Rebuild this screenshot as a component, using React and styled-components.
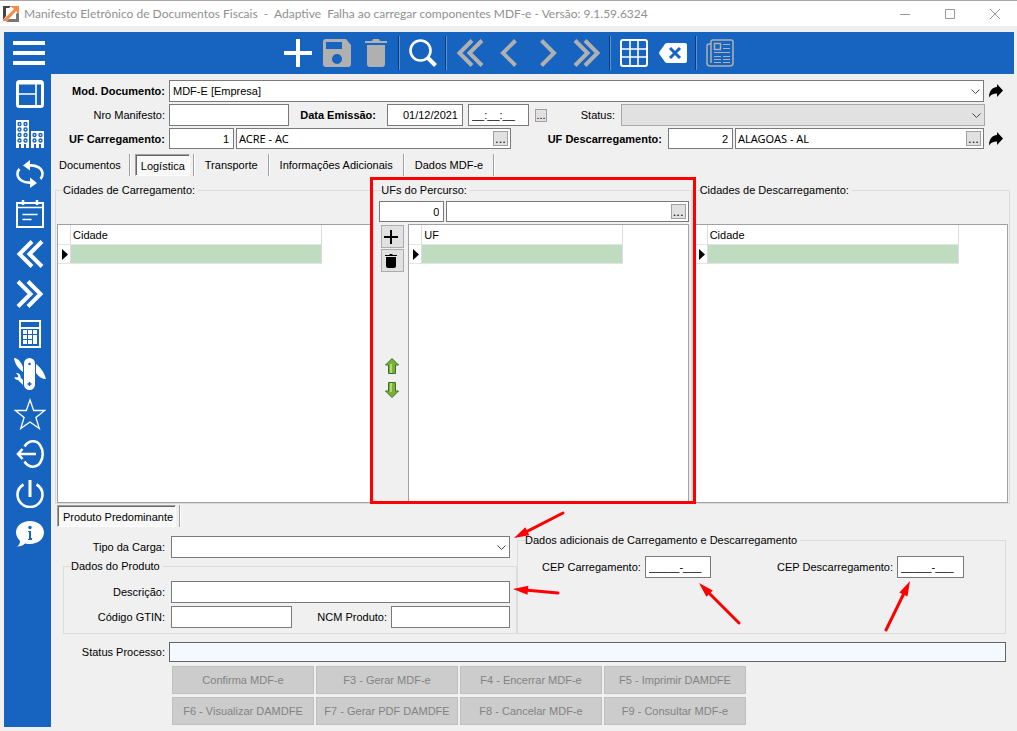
import React from 'react'
import styled, { createGlobalStyle, css } from 'styled-components'

const GlobalStyle = createGlobalStyle`
  * {
    box-sizing: border-box;
  }
  body {
    margin: 0;
    background: #f0f0f0;
    color: #000;
    font-family: "Liberation Sans", Arial, sans-serif;
    font-size: 11px;
    line-height: 14px;
  }
  button, input, select {
    font: inherit;
    color: inherit;
    margin: 0;
    border-radius: 0;
  }
  svg {
    display: block;
    flex: none;
  }
`

const Window = styled.div`
  display: flex;
  flex-direction: column;
  min-height: 100vh;
`

const TitleBar = styled.header`
  display: flex;
  align-items: center;
  height: 26px;
  padding-left: 3px;
  background: #fff;
  border-top: 1px solid #a8a8a8;
`

const Title = styled.h1`
  flex: 1;
  margin: 0 0 0 5px;
  color: #909090;
  font-family: Lato, "Noto Sans", sans-serif;
  font-size: 12px;
  font-weight: 400;
  white-space: pre;
`

const WindowButton = styled.button`
  display: flex;
  align-items: center;
  justify-content: center;
  width: 45px;
  height: 24px;
  padding: 0;
  border: 0;
  background: none;
`

const Frame = styled.div`
  flex: 1;
  display: flex;
  flex-direction: column;
  padding: 6px 3px 4px 4px;
`

const Toolbar = styled.div`
  display: grid;
  grid-template-columns: 1fr auto 1fr;
  align-items: center;
  height: 42px;
  padding: 0 6px 0 5px;
  background: #1664c0;
`

const ToolGroup = styled.div`
  display: flex;
  align-items: center;
`

const ToolButton = styled.button`
  display: flex;
  align-items: center;
  justify-content: center;
  width: 39px;
  height: 40px;
  padding: 0;
  border: 0;
  background: none;
`

const ToolDivider = styled.div`
  width: 2px;
  height: 34px;
  margin: 0 3px;
  border-left: 1px solid #0c3c78;
  border-right: 1px solid #5a93d6;
`

const Body = styled.div`
  flex: 1;
  display: flex;
`

const SideBar = styled.nav`
  display: flex;
  flex-direction: column;
  flex: none;
  width: 47px;
  padding-left: 4px;
  background: #1664c0;
`

const SideButton = styled.button`
  display: flex;
  align-items: center;
  justify-content: center;
  height: 40px;
  padding: 0;
  border: 0;
  background: none;
`

const Main = styled.main`
  flex: 1;
  min-width: 0;
  display: flex;
  flex-direction: column;
  padding: 6px 4px 2px;
`

const Rows = styled.div`
  display: flex;
  flex-direction: column;
  gap: ${props => props.$gap || 2}px;
`

const Row = styled.div`
  position: relative;
  display: flex;
  align-items: center;
  padding-right: ${props => props.$end || 0}px;
`

const Label = styled.label`
  flex: none;
  width: ${props => props.$width ? props.$width + 'px' : 'auto'};
  padding-right: ${props => props.$end || 4}px;
  font-weight: ${props => props.$bold ? 700 : 400};
  text-align: right;
  white-space: nowrap;
`

const fieldFont = css`
  font-family: "Noto Sans", sans-serif;
  font-size: 11px;
`

const TextField = styled.input`
  flex: ${props => props.$width ? 'none' : '1'};
  width: ${props => props.$width ? props.$width + 'px' : 'auto'};
  min-width: 0;
  height: ${props => props.$low ? 21 : 22}px;
  margin-right: ${props => props.$after || 0}px;
  padding: 0 4px 0 3px;
  border: 1px solid #7a7a7a;
  background: #fff;
  text-align: ${props => props.$right ? 'right' : 'left'};
  outline: none;
`

const SelectBox = styled.div`
  flex: 1;
  min-width: 0;
  display: grid;
  align-items: center;
  svg {
    grid-area: 1 / 1;
    justify-self: end;
    margin-right: 4px;
    pointer-events: none;
  }
`

const Select = styled.select`
  grid-area: 1 / 1;
  appearance: none;
  width: 100%;
  height: 22px;
  padding: 0 20px 0 3px;
  border: 1px solid #7a7a7a;
  background: #fff;
  opacity: 1;
  &:disabled {
    border-color: #a8a8a8;
    background: #e1e1e1;
  }
`

const LookupBox = styled.div`
  flex: 1 1 ${props => props.$basis || 0}px;
  min-width: 0;
  display: flex;
  align-items: center;
  height: 21px;
  padding-right: 2px;
  border: 1px solid #7a7a7a;
  background: #fff;
  input {
    ${fieldFont}
    flex: 1;
    min-width: 0;
    padding: 0 2px;
    border: 0;
    background: none;
    outline: none;
  }
`

const Dots = styled.button`
  flex: none;
  display: flex;
  align-items: flex-end;
  justify-content: center;
  width: ${props => props.$small ? 12 : 15}px;
  height: ${props => props.$small ? 13 : 15}px;
  padding: 0;
  border: 1px solid #a0a0a0;
  background: #e1e1e1;
  font-size: ${props => props.$small ? 11 : 13}px;
  line-height: 12px;
`

const Follow = styled.button`
  flex: none;
  display: flex;
  width: 26px;
  padding: 0 0 0 5px;
  border: 0;
  background: none;
`

const Tabs = styled.div`
  display: flex;
  align-items: center;
  height: 22px;
  margin-top: ${props => props.$top}px;
  padding-left: ${props => props.$indent}px;
`

const Tab = styled.button`
  height: 22px;
  padding: 0 10px;
  border: 0;
  background: none;
  white-space: nowrap;
  &:first-child {
    padding: 0 8px 0 0;
  }
  &[aria-selected='true'] {
    margin: 0 3px 0 4px;
    padding: 1px 4px 0 5px;
    border: 1px solid #fff;
    border-top-color: #a0a0a0;
    border-left-color: #a0a0a0;
    background: #f8f8f8;
    box-shadow: inset 1px 1px 0 #696969;
  }
  &[aria-selected='true']:first-child {
    margin-left: 0;
    padding-right: 2px;
  }
`

const TabDivider = styled.div`
  width: 2px;
  height: 22px;
  border-left: 1px solid #a0a0a0;
  border-right: 1px solid #fff;
`

const Groups = styled.div`
  flex: 1;
  display: grid;
  grid-template-columns: repeat(3, minmax(0, 1fr));
  margin-top: 7px;
`

const GroupSlot = styled.div`
  position: relative;
  display: flex;
`

const Group = styled.fieldset`
  flex: 1;
  min-width: 0;
  display: flex;
  flex-direction: column;
  margin: 0;
  padding: ${props => props.$padding};
  border: 1px solid #dcdcdc;
  legend {
    margin-left: ${props => props.$legend || 6}px;
    padding: 0 3px 0 0;
  }
`

const GridBox = styled.div`
  flex: 1;
  min-height: 80px;
  border: 1px solid #a0a0a8;
  background: #fff;
`

const Table = styled.table`
  border-collapse: separate;
  border-spacing: 0;
  table-layout: fixed;
  width: ${props => props.$width}px;
  th, td {
    height: 20px;
    padding: 0 0 0 2px;
    border-right: 1px solid #dcdcdc;
    border-bottom: 1px solid #e4e4e4;
    font-weight: 400;
    text-align: left;
  }
  td {
    height: 19px;
  }
  th:first-child, td:first-child {
    width: 13px;
    padding: 0 0 0 4px;
  }
  td:last-child {
    background: #c0dcc0;
  }
`

const RouteBody = styled.div`
  flex: 1;
  display: flex;
  margin-top: 2px;
`

const RouteTools = styled.div`
  display: flex;
  flex-direction: column;
  align-items: center;
  gap: 1px;
  width: 29px;
  padding: 1px 4px 0 1px;
`

const SquareButton = styled.button`
  display: flex;
  align-items: center;
  justify-content: center;
  width: 23px;
  height: 23px;
  padding: 0 2px 0 0;
  border: 1px solid #adadad;
  background: #e1e1e1;
`

const MoveButtons = styled.div`
  display: flex;
  flex-direction: column;
  gap: 8px;
  margin-top: 85px;
`

const MoveButton = styled.button`
  display: flex;
  padding: 0;
  border: 0;
  background: none;
`

const Highlight = styled.div`
  position: absolute;
  z-index: 1;
  top: -6px;
  right: -4px;
  bottom: 0;
  left: -3px;
  border: 3px solid #f00;
  pointer-events: none;
`

const Details = styled.div`
  display: grid;
  grid-template-columns: minmax(0, 462fr) minmax(0, 489fr);
  margin: 6px 4px 0 0;
`

const Product = styled.div`
  display: flex;
  flex-direction: column;
  padding-top: 3px;
`

const ProductGroup = styled.div`
  display: flex;
  margin: 1px 0 0 8px;
`

const ZipRow = styled.div`
  display: flex;
  justify-content: space-between;
  padding: 9px 41px 0 24px;
`

const PointerMark = styled.svg`
  position: absolute;
  z-index: 1;
  top: ${props => props.$top}px;
  left: ${props => props.$left};
  overflow: visible;
  pointer-events: none;
`

const StatusRow = styled.div`
  display: flex;
  align-items: center;
  margin: 8px 4px 0 0;
`

const StatusField = styled(TextField)`
  height: 20px;
  border-color: #646464;
  background: #f4f8ff;
`

const Actions = styled.div`
  display: grid;
  grid-template-columns: repeat(4, 142px);
  gap: 3px 2px;
  margin: 4px 0 0 117px;
`

const ActionButton = styled.button`
  height: 28px;
  padding: 0;
  border: 1px solid #bfbfbf;
  background: #ccc;
  &:disabled {
    color: #838383;
  }
`

const BLUE = '#1664c0'

const Svg = ({ size = 28, children, ...rest }) => (
  <svg width={size} height={size} viewBox={`0 0 ${size} ${size}`} fill='none' aria-hidden='true' {...rest}>
    {children}
  </svg>
)

const DoubleChevron = ({ color }) => (
  <Svg stroke={color} strokeWidth='4'>
    <path d='M16 1.5 3.5 14 16 26.5M26 1.5 13.5 14 26 26.5'/>
  </Svg>
)

const DoubleChevronRight = ({ color }) => (
  <Svg stroke={color} strokeWidth='4'>
    <path d='M2 1.5 14.5 14 2 26.5M12 1.5 24.5 14 12 26.5'/>
  </Svg>
)

const tools = [
  ['Novo', <Svg stroke='#fff' strokeWidth='4'><path d='M14 0v28M0 14h28'/></Svg>],
  ['Salvar', (
    <Svg fill='#b0b0b0'>
      <path d='M3 0h20l5 6v19a3 3 0 0 1-3 3H3a3 3 0 0 1-3-3V3a3 3 0 0 1 3-3z'/>
      <path fill={BLUE} d='M3 3h16v7H3z'/>
      <circle cx='14' cy='20' r='5' fill={BLUE}/>
    </Svg>
  )],
  ['Excluir', (
    <Svg fill='#b0b0b0'>
      <path d='M3 2h7l1-2h6l1 2h7v2H3zM5 6h18v19a3 3 0 0 1-3 3H8a3 3 0 0 1-3-3z'/>
    </Svg>
  )],
  null,
  ['Pesquisar', (
    <Svg stroke='#fff'>
      <circle cx='11.5' cy='11.5' r='10' strokeWidth='2.6'/>
      <path strokeWidth='4' d='m18.5 18.5 8 8'/>
    </Svg>
  )],
  null,
  ['Primeiro', <DoubleChevron color='#b0b0b0'/>],
  ['Anterior', <Svg stroke='#b0b0b0' strokeWidth='4'><path d='M20.5 1.5 8 14 20.500 26.5'/></Svg>],
  ['Seguinte', <Svg stroke='#b0b0b0' strokeWidth='4'><path d='M7.5 1.5 20 14 7.5 26.5'/></Svg>],
  ['Último', <DoubleChevronRight color='#b0b0b0'/>],
  null,
  ['Grade', (
    <Svg stroke='#fff' strokeWidth='2'>
      <rect x='1' y='1' width='26' height='26' rx='2'/>
      <path strokeWidth='1.6' d='M10 1v26M18 1v26M1 10h26M1 18h26'/>
    </Svg>
  )],
  ['Limpar', (
    <Svg>
      <path fill='#fff' d='M8 4h18a2 2 0 0 1 2 2v16a2 2 0 0 1-2 2H8a3 3 0 0 1-2-1l-5-7a3 3 0 0 1 0-4l5-7a3 3 0 0 1 2-1z'/>
      <path stroke={BLUE} strokeWidth='3' d='m11 9 10 10M21 9 11 19'/>
    </Svg>
  )],
  null,
  ['Notícias', (
    <Svg stroke='#b0b0b0' strokeWidth='1.5'>
      <path d='M5 5H3a2 2 0 0 0-2 2v17a3 3 0 0 0 3 3h20a3 3 0 0 0 3-3V3a2 2 0 0 0-2-2H7a2 2 0 0 0-2 2v21'/>
      <path d='M8.5 4.5h6v6h-6z'/>
      <path strokeWidth='1' d='M17 5.5h7M17 9.500h7M8 13.5h16M8 17.500h7M17 17.500h7M8 20.500h7M17 20.500h7M8 23.500h7M17 23.500h7'/>
    </Svg>
  )]
]

const floors = [4, 9.5, 15, 20.5]

const sideItems = [
  ['Painel', (
    <Svg stroke='#fff'>
      <rect x='1.5' y='1.5' width='25' height='25' rx='2' strokeWidth='3'/>
      <path strokeWidth='1.6' d='M2 14h18M20 3v23'/>
      <path strokeWidth='2' d='M2 3.5h24'/>
    </Svg>
  )],
  ['Empresas', (
    <Svg>
      <path fill='#fff' d='M0 0h13v28h-3v-4H8v4H5v-4H3v4H0zM15 11h13v17h-3v-4h-2v4h-3v-4h-2v4h-3z'/>
      <g stroke={BLUE} strokeWidth='1.4'>
        {floors.map(y => (
          <g key={y}>
            <circle cx='3.5' cy={y} r='1.5'/>
            <circle cx='9.5' cy={y} r='1.5'/>
          </g>
        ))}
        {floors.slice(2).map(y => (
          <g key={y}>
            <circle cx='18.5' cy={y} r='1.5'/>
            <circle cx='24.5' cy={y} r='1.5'/>
          </g>
        ))}
      </g>
    </Svg>
  )],
  ['Atualizar', (
    <Svg>
      <path stroke='#fff' strokeWidth='2.6' d='M12 5.5c9-1 14.500 3 14.500 8.500 0 2-.5 3.500-2 5M16 22.500C7 23.500 1.500 19 1.500 14c0-2 .5-3.500 2-5'/>
      <path fill='#fff' d='M14 0v10.500L7 5.500zM14 17.500V28l7-5z'/>
    </Svg>
  )],
  ['Agenda', (
    <Svg stroke='#fff' strokeWidth='2'>
      <path d='M1 3h26v24H1z'/>
      <path strokeWidth='1.6' d='M1 7.500h26M6.500 14.500h15M6.500 19.500h9'/>
      <path strokeWidth='2.5' d='M7 0v5M21 0v5'/>
    </Svg>
  )],
  ['Anterior', <DoubleChevron color='#fff'/>],
  ['Seguinte', <DoubleChevronRight color='#fff'/>],
  ['Calculadora', (
    <Svg>
      <path stroke='#fff' strokeWidth='2' d='M4 1h20v26H4zM4 8h20'/>
      <path fill='#fff' d='M7 10h4v4H7zM12 10h4v4h-4zM17 10h4v4h-4zM7 15h4v4H7zM12 15h4v4h-4zM17 15h4v9h-4zM7 20h4v4H7zM12 20h4v4h-4z'/>
    </Svg>
  )],
  ['Ferramentas', (
    <Svg size={32}>
      <rect x='10' y='0' width='11' height='32' rx='5.5' fill='#fff'/>
      <path fill='#fff' d='M0 0c4 0 7 4 9 9v5C5 11 1 7 0 0zM22 6c5 4 8 8 10 15-4 0-7-2-10-6z'/>
      <path fill='#fff' d='M2 15c3 0 5 2 4.500 4.500L9 22v5l-5-5c-2 0-3.500-1-3.500-3l3 .5 1-1.500z'/>
      <circle cx='15.500' cy='6' r='1.3' fill={BLUE}/>
      <path stroke={BLUE} strokeWidth='1.5' d='M15.500 24v4M13.500 26h4'/>
    </Svg>
  )],
  ['Favoritos', (
    <Svg size={32} stroke='#fff' strokeWidth='1.3'>
      <path d='m16 2 3.700 10.500h11l-8.800 7 3.400 11L16 24l-9.300 6.500 3.400-11-8.800-7h11z'/>
    </Svg>
  )],
  ['Sair', (
    <Svg stroke='#fff' strokeWidth='2.6'>
      <path d='M8.500 6.500C11 2.500 14.500 1.300 17 1.300c6 0 9.700 6 9.700 12.700S23 26.700 17 26.700c-2.500 0-6-1.200-8.500-5.200M2 14h18M6.500 9 2 14l4.500 5'/>
    </Svg>
  )],
  ['Desligar', (
    <Svg stroke='#fff' strokeWidth='2.6'>
      <path d='M7.500 4.500C4 6.500 1.500 10 1.500 14.500a12.500 12.500 0 0 0 25 0c0-4.500-2.500-8-6-10'/>
      <path strokeWidth='3' d='M14 0v17'/>
    </Svg>
  )],
  ['Informações', (
    <Svg>
      <path fill='#fff' d='M14 1c8 0 14 5 14 11.500S22 24 14 24c-2 0-3 0-5-.5-2 2-4 3-8 3 2-1 3-3 3-5.500-2-2-4-5-4-8.500C0 6 6 1 14 1z'/>
      <circle cx='14' cy='7.5' r='1.7' fill={BLUE}/>
      <path fill={BLUE} d='M12 11h3v7h1v2h-4v-1h1v-7h-1z'/>
    </Svg>
  )]
]

const SelectArrow = () => (
  <Svg size={9} stroke='#444'><path d='m.5 2.500 4 4 4-4'/></Svg>
)

const FollowIcon = () => (
  <Svg size={14} fill='#000'>
    <path d='M8 0v3C3 3.500 0 7 0 13.500 2 10.500 4 9.500 8 9.500v3.500l6-6.500z'/>
  </Svg>
)

const upArrow = ['m8 .5 6.5 6.5h-3v8.500h-7V7h-3z', 'M6 6h2v9H6z']
const downArrow = ['m8 15.500 6.500-6.500h-3V.5h-7V9h-3z', 'M6 1h2v9H6z']

const MoveIcon = ({ shape }) => (
  <Svg size={16}>
    <path fill='#7cb030' stroke='#3c6c34' d={shape[0]}/>
    <path fill='#b4d870' d={shape[1]}/>
  </Svg>
)

// red arrow, its tip sits at the origin and its tail at x, y
function Pointer ({ x, y, top, left }) {
  const angle = Math.atan2(y, x) * 180 / Math.PI
  const length = Math.hypot(x, y)
  return (
    <PointerMark $top={top} $left={left} width='1' height='1' aria-hidden='true'>
      <g transform={`rotate(${angle})`}>
        <path d='M0 0 15-4.500v9z' fill='#f00'/>
        <path d={`M12 0H${length}`} stroke='#f00' strokeWidth='3' strokeLinecap='round'/>
      </g>
    </PointerMark>
  )
}

function DropDown ({ id, value, disabled }) {
  return (
    <SelectBox>
      <Select id={id} disabled={disabled}>
        <option>{value}</option>
      </Select>
      <SelectArrow/>
    </SelectBox>
  )
}

function Lookup ({ label, value, basis }) {
  return (
    <LookupBox $basis={basis}>
      <input aria-label={label} defaultValue={value}/>
      <Dots aria-label={'Localizar ' + label}>...</Dots>
    </LookupBox>
  )
}

function DataGrid ({ column, width }) {
  return (
    <GridBox>
      <Table $width={width + 14}>
        <thead>
          <tr><th/><th>{column}</th></tr>
        </thead>
        <tbody>
          <tr>
            <td><svg width='6' height='11' viewBox='0 0 6 11'><path d='M0 0v11l6-5.500z'/></svg></td>
            <td/>
          </tr>
        </tbody>
      </Table>
    </GridBox>
  )
}

const actions = [
  'Confirma MDF-e', 'F3 - Gerar MDF-e', 'F4 - Encerrar MDF-e', 'F5 - Imprimir DAMDFE',
  'F6 - Visualizar DAMDFE', 'F7 - Gerar PDF DAMDFE', 'F8 - Cancelar MDF-e', 'F9 - Consultar MDF-e'
]

const tabs = ['Documentos', 'Logística', 'Transporte', 'Informações Adicionais', 'Dados MDF-e']

export default function App () {
  return (
    <Window>
      <GlobalStyle/>
      <TitleBar>
        <Svg size={16}>
          <path fill='#444' d='M0 0h8L6 2H3v8l-3 4z'/>
          <path fill='#777' d='M16 5v11H3l3-3h7V8z'/>
          <path fill='#f58a4a' d='M7 0h9v8l-3-3L4 15H0v-1L11 3z'/>
        </Svg>
        <Title>{'Manifesto Eletrônico de Documentos Fiscais  -  Adaptive  Falha ao carregar componentes MDF-e - Versão: 9.1.59.6324'}</Title>
        <WindowButton aria-label='Minimizar'><Svg size={10} stroke='#999'><path d='M0 5.500h10'/></Svg></WindowButton>
        <WindowButton aria-label='Maximizar'><Svg size={10} stroke='#999'><path d='M.5.5h9v9h-9z'/></Svg></WindowButton>
        <WindowButton aria-label='Fechar'><Svg size={10} stroke='#999'><path d='m0 0 10 10M10 0 0 10'/></Svg></WindowButton>
      </TitleBar>
      <Frame>
        <Toolbar>
          <ToolGroup>
            <ToolButton aria-label='Menu'>
              <Svg size={32} stroke='#fff' strokeWidth='4'><path d='M0 6h32M0 16h32M0 26h32'/></Svg>
            </ToolButton>
          </ToolGroup>
          <ToolGroup>
            {tools.map((tool, i) => tool
              ? <ToolButton key={i} aria-label={tool[0]}>{tool[1]}</ToolButton>
              : <ToolDivider key={i}/>)}
          </ToolGroup>
        </Toolbar>
        <Body>
          <SideBar>
            {sideItems.map(([name, icon]) => (
              <SideButton key={name} aria-label={name}>{icon}</SideButton>
            ))}
          </SideBar>
          <Main>
            <Rows>
              <Row>
                <Label htmlFor='model' $width={114} $bold>Mod. Documento:</Label>
                <DropDown id='model' value='MDF-E [Empresa]'/>
                <Follow aria-label='Abrir documento'><FollowIcon/></Follow>
              </Row>
              <Row $end={25}>
                <Label htmlFor='number' $width={114}>Nro Manifesto:</Label>
                <TextField id='number' $width={120}/>
                <Label htmlFor='date' $width={98} $end={11} $bold>Data Emissão:</Label>
                <TextField id='date' $width={76} $after={5} $right defaultValue='01/12/2021'/>
                <TextField aria-label='Hora' $width={61} $after={6} defaultValue='__:__:__'/>
                <Dots $small aria-label='Escolher data'>...</Dots>
                <Label htmlFor='status' $width={74} $end={6}>Status:</Label>
                <DropDown id='status' value='' disabled/>
              </Row>
              <Row>
                <Label htmlFor='from' $width={114} $bold>UF Carregamento:</Label>
                <TextField id='from' $width={65} $after={2} $low $right defaultValue='1'/>
                <Lookup label='UF Carregamento' value='ACRE - AC' basis={275}/>
                <Label htmlFor='to' $width={157} $end={6} $bold>UF Descarregamento:</Label>
                <TextField id='to' $width={65} $after={2} $low $right defaultValue='2'/>
                <Lookup label='UF Descarregamento' value='ALAGOAS - AL' basis={249}/>
                <Follow aria-label='Abrir UF'><FollowIcon/></Follow>
              </Row>
            </Rows>
            <Tabs role='tablist' $top={5} $indent={4}>
              {tabs.map(tab => (
                <React.Fragment key={tab}>
                  <Tab role='tab' aria-selected={tab === 'Logística'}>{tab}</Tab>
                  <TabDivider/>
                </React.Fragment>
              ))}
            </Tabs>
            <Groups>
              <GroupSlot>
                <Group $padding='27px 1px 0'>
                  <legend>Cidades de Carregamento:</legend>
                  <DataGrid column='Cidade' width={250}/>
                </Group>
              </GroupSlot>
              <GroupSlot>
                <Group $padding='4px 2px 0 5px' $legend={2}>
                  <legend>UFs do Percurso:</legend>
                  <Row>
                    <TextField aria-label='Código UF' $width={65} $after={2} $low $right defaultValue='0'/>
                    <Lookup label='UF' value=''/>
                  </Row>
                  <RouteBody>
                    <RouteTools>
                      <SquareButton aria-label='Adicionar'>
                        <Svg size={14} stroke='#000' strokeWidth='2'><path d='M7 0v14M0 7h14'/></Svg>
                      </SquareButton>
                      <SquareButton aria-label='Remover'>
                        <Svg size={14} fill='#000'><path d='M1 1h4l1-1h2l1 1h4v1H1zM2 3h10v9a2 2 0 0 1-2 2H4a2 2 0 0 1-2-2z'/></Svg>
                      </SquareButton>
                      <MoveButtons>
                        <MoveButton aria-label='Mover para cima'><MoveIcon shape={upArrow}/></MoveButton>
                        <MoveButton aria-label='Mover para baixo'><MoveIcon shape={downArrow}/></MoveButton>
                      </MoveButtons>
                    </RouteTools>
                    <DataGrid column='UF' width={200}/>
                  </RouteBody>
                </Group>
                <Highlight/>
              </GroupSlot>
              <GroupSlot>
                <Group $padding='27px 1px 0'>
                  <legend>Cidades de Descarregamento:</legend>
                  <DataGrid column='Cidade' width={250}/>
                </Group>
              </GroupSlot>
            </Groups>
            <Tabs role='tablist' $top={1} $indent={2}>
              <Tab role='tab' aria-selected='true'>Produto Predominante</Tab>
              <TabDivider/>
            </Tabs>
            <Details>
              <Product>
                <Row $end={7}>
                  <Label htmlFor='cargo' $width={116} $end={6}>Tipo da Carga:</Label>
                  <DropDown id='cargo' value=''/>
                  <Pointer x={49} y={-25} top={2} left='calc(100% - 3px)'/>
                </Row>
                <ProductGroup>
                  <Group $padding='8px 6px 5px 0' $legend={7}>
                    <legend>Dados do Produto</legend>
                    <Rows $gap={3}>
                      <Row>
                        <Label htmlFor='description' $width={107} $end={6}>Descrição:</Label>
                        <TextField id='description'/>
                        <Pointer x={45} y={4} top={8} left='calc(100% + 3px)'/>
                      </Row>
                      <Row>
                        <Label htmlFor='gtin' $width={107} $end={6}>Código GTIN:</Label>
                        <TextField id='gtin' $width={121}/>
                        <Label htmlFor='ncm' $width={99}>NCM Produto:</Label>
                        <TextField id='ncm'/>
                      </Row>
                    </Rows>
                  </Group>
                </ProductGroup>
              </Product>
              <Group $padding='0' $legend={7}>
                <legend>Dados adicionais de Carregamento e Descarregamento</legend>
                <ZipRow>
                  <Row>
                    <Label htmlFor='zipFrom'>CEP Carregamento:</Label>
                    <TextField id='zipFrom' $width={66} defaultValue='_____-___'/>
                    <Pointer x={40} y={40} top={27} left='calc(100% - 12px)'/>
                  </Row>
                  <Row>
                    <Label htmlFor='zipTo'>CEP Descarregamento:</Label>
                    <TextField id='zipTo' $width={67} defaultValue='_____-___'/>
                    <Pointer x={-24} y={49} top={25} left='calc(100% - 54px)'/>
                  </Row>
                </ZipRow>
              </Group>
            </Details>
            <StatusRow>
              <Label htmlFor='process' $width={114}>Status Processo:</Label>
              <StatusField id='process' readOnly/>
            </StatusRow>
            <Actions>
              {actions.map(action => (
                <ActionButton key={action} disabled>{action}</ActionButton>
              ))}
            </Actions>
          </Main>
        </Body>
      </Frame>
    </Window>
  )
}
